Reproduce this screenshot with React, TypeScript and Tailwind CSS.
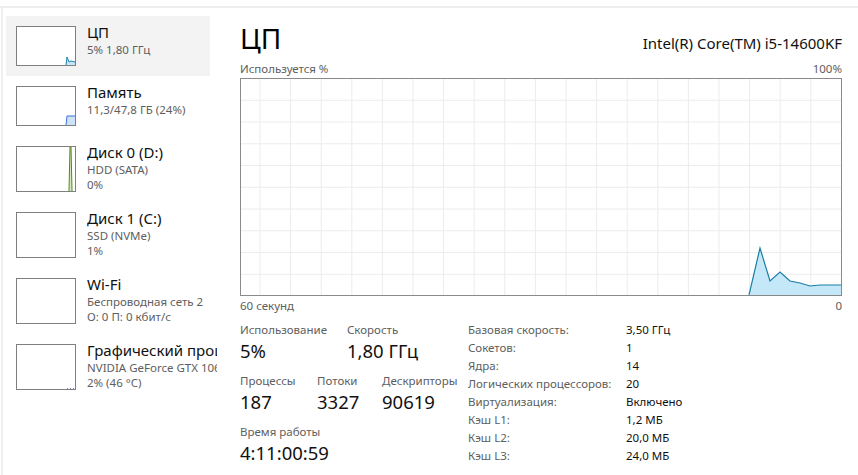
import React from "react";

const FONT = { fontFamily: '"Noto Sans", "Open Sans", sans-serif' };

function CpuThumb() {
  return (
    <svg width="58" height="38" viewBox="0 0 58 38" className="block">
      <polygon points="49,38 50,30 52,35 54,34 58,35 58,38" fill="#c6e6f5" />
      <polyline points="49,38 50,30 52,35 54,34 58,35" fill="none" stroke="#1b7fae" strokeWidth="1" />
    </svg>
  );
}

function MemThumb() {
  return (
    <svg width="58" height="38" viewBox="0 0 58 38" className="block">
      <polygon points="49,38 50,29 58,29 58,38" fill="#cfe2f7" />
      <polyline points="49,38 50,29 58,29" fill="none" stroke="#3b73d6" strokeWidth="1" />
    </svg>
  );
}

function DiskThumb() {
  return (
    <svg width="58" height="44" viewBox="0 0 58 44" className="block">
      <polygon points="52,44 53,0 54,0 55,44" fill="#d6ecc0" />
      <polyline points="52,44 53,0 54,0 55,44" fill="none" stroke="#4e8a13" strokeWidth="1" />
    </svg>
  );
}

function GpuThumb() {
  return (
    <svg width="58" height="44" viewBox="0 0 58 44" className="block">
      <polyline points="50,43.5 58,43.5" fill="none" stroke="#9a6ad8" strokeWidth="1" strokeDasharray="1 2" />
    </svg>
  );
}

function EmptyThumb({ h }: { h: number }) {
  return <svg width="58" height={h} className="block" />;
}

type Item = {
  title: string;
  lines: string[];
  thumb: React.ReactNode;
  tall: boolean;
  selected?: boolean;
};

const items: Item[] = [
  { title: "ЦП", lines: ["5% 1,80 ГГц"], thumb: <CpuThumb />, tall: false, selected: true },
  { title: "Память", lines: ["11,3/47,8 ГБ (24%)"], thumb: <MemThumb />, tall: false },
  { title: "Диск 0 (D:)", lines: ["HDD (SATA)", "0%"], thumb: <DiskThumb />, tall: true },
  { title: "Диск 1 (C:)", lines: ["SSD (NVMe)", "1%"], thumb: <EmptyThumb h={44} />, tall: true },
  { title: "Wi-Fi", lines: ["Беспроводная сеть 2", "О: 0 П: 0 кбит/с"], thumb: <EmptyThumb h={44} />, tall: true },
  { title: "Графический процессор 0", lines: ["NVIDIA GeForce GTX 1060", "2% (46 °C)"], thumb: <GpuThumb />, tall: true },
];

function SideItem({ it }: { it: Item }) {
  return (
    <div className={`flex w-[204px] p-[10px] gap-[11px] ${it.selected ? "bg-[#f3f3f3]" : ""}`}>
      <div className={`shrink-0 w-[60px] ${it.tall ? "h-[46px]" : "h-[40px]"} border border-[#7f7f7f] bg-white`}>
        {it.thumb}
      </div>
      <div className="shrink-0 w-[130px] overflow-hidden whitespace-nowrap -mt-[4px]">
        <div className="text-[15px] leading-[20px] text-[#111]">{it.title}</div>
        {it.lines.map((l, i) => (
          <div key={i} className="text-[11.5px] leading-[15px] text-[#5e5e5e]">
            {l}
          </div>
        ))}
      </div>
    </div>
  );
}

function Chart() {
  const W = 600;
  const H = 216;
  const vx: number[] = [];
  for (let k = 0; k < 19; k++) vx.push(19 + 30.6 * k);
  const hy: number[] = [];
  for (let k = 1; k < 10; k++) hy.push(21.75 * k - 0.5);
  const pts = "508,216 519,169 529,202 539,193 549,202 559,204 569,207 579,206 600,206";
  return (
    <div className="w-[602px] h-[218px] border border-[#8a8a8a] bg-white">
      <svg width={W} height={H} viewBox={`0 0 ${W} ${H}`} className="block">
        {vx.map((x, i) => (
          <line key={"v" + i} x1={x} y1={0} x2={x} y2={H} stroke="#ececec" strokeWidth="1" />
        ))}
        {hy.map((y, i) => (
          <line key={"h" + i} x1={0} y1={y} x2={W} y2={y} stroke="#ececec" strokeWidth="1" />
        ))}
        <polygon points={pts + " 600,216"} fill="#c4e8f7" />
        <polyline points={pts} fill="none" stroke="#1a7ea6" strokeWidth="1.2" />
      </svg>
    </div>
  );
}

function Stat({ label, value, w }: { label: string; value: string; w: string }) {
  return (
    <div className={`${w} shrink-0`}>
      <div className="text-[11.5px] leading-[16px] text-[#5e5e5e] whitespace-nowrap">{label}</div>
      <div className="text-[18.5px] leading-[26px] text-[#111] whitespace-nowrap">{value}</div>
    </div>
  );
}

const details: [string, string][] = [
  ["Базовая скорость:", "3,50 ГГц"],
  ["Сокетов:", "1"],
  ["Ядра:", "14"],
  ["Логических процессоров:", "20"],
  ["Виртуализация:", "Включено"],
  ["Кэш L1:", "1,2 МБ"],
  ["Кэш L2:", "20,0 МБ"],
  ["Кэш L3:", "24,0 МБ"],
];

export default function App() {
  return (
    <div className="w-[858px] h-[475px] bg-white overflow-hidden flex flex-col" style={FONT}>
      <div className="h-[6px] shrink-0" />
      <div className="h-[2px] shrink-0 bg-[#eeeeee]" />
      <div className="flex flex-1 min-h-0">
        <div className="ml-[1px] w-[219px] shrink-0 border-l-2 border-[#efefef] pl-[3px] pt-[8px] flex flex-col">
          {items.map((it, i) => (
            <SideItem key={i} it={it} />
          ))}
        </div>
        <div className="flex-1 pl-[20px] pr-[16px] pt-[12px] flex flex-col">
          <div className="flex items-baseline justify-between h-[36px] leading-[36px]">
            <div className="text-[28px] text-black">ЦП</div>
            <div className="text-[15px] text-[#111]">Intel(R) Core(TM) i5-14600KF</div>
          </div>
          <div className="mt-[5px] flex justify-between text-[11.5px] leading-[16px] text-[#5e5e5e]">
            <span>Используется %</span>
            <span>100%</span>
          </div>
          <div className="mt-[1px]">
            <Chart />
          </div>
          <div className="mt-[2px] flex justify-between text-[11.5px] leading-[16px] text-[#5e5e5e]">
            <span>60 секунд</span>
            <span>0</span>
          </div>
          <div className="flex mt-[4px]">
            <div className="w-[228px] shrink-0 flex flex-col gap-[9px] pt-[4px]">
              <div className="flex">
                <Stat label="Использование" value="5%" w="w-[107px]" />
                <Stat label="Скорость" value="1,80 ГГц" w="w-[100px]" />
              </div>
              <div className="flex">
                <Stat label="Процессы" value="187" w="w-[77px]" />
                <Stat label="Потоки" value="3327" w="w-[65px]" />
                <Stat label="Дескрипторы" value="90619" w="w-[80px]" />
              </div>
              <div className="flex">
                <Stat label="Время работы" value="4:11:00:59" w="w-[150px]" />
              </div>
            </div>
            <div className="flex flex-col pt-[3px]">
              {details.map(([k, v], i) => (
                <div key={i} className="flex h-[18px] leading-[18px] text-[11.5px] whitespace-nowrap">
                  <div className="w-[158px] text-[#5e5e5e]">{k}</div>
                  <div className="text-[#111]">{v}</div>
                </div>
              ))}
            </div>
          </div>
        </div>
      </div>
    </div>
  );
}
